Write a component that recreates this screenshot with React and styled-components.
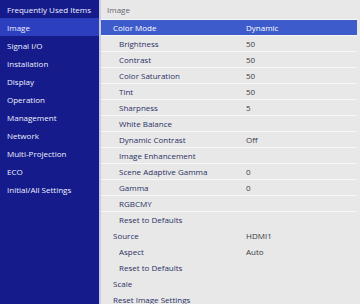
import React from "react";
import styled, { createGlobalStyle } from "styled-components";

const GlobalStyle = createGlobalStyle`
  html, body {
    margin: 0;
    padding: 0;
    background: #e8e8e8;
  }
  body {
    font-family: "Open Sans", "Noto Sans", sans-serif;
  }
`;

const Screen = styled.div`
  display: flex;
  width: 360px;
  height: 304px;
  overflow: hidden;
  font-size: 8px;
`;

const Sidebar = styled.nav`
  width: 99px;
  flex-shrink: 0;
  background: #151b8b;
  border-right: 2px solid #c9cbe0;
  display: flex;
  flex-direction: column;
`;

const NavItem = styled.div`
  height: 18px;
  flex-shrink: 0;
  display: flex;
  align-items: center;
  padding-left: 7px;
  color: #eef0ff;
  white-space: nowrap;
  background: ${(p) => (p.$active ? "#2c3fbf" : "transparent")};
`;

const Panel = styled.main`
  flex: 1;
  background: #e8e8e8;
  display: flex;
  flex-direction: column;
  padding-right: 3px;
  overflow: hidden;
`;

const Header = styled.div`
  height: 19px;
  flex-shrink: 0;
  display: flex;
  align-items: center;
  padding-left: 6px;
  color: #666670;
  border-bottom: 1px solid #f6f6f6;
`;

const Row = styled.div`
  height: 15px;
  flex-shrink: 0;
  display: grid;
  grid-template-columns: 145px 1fr;
  align-items: center;
  border-bottom: 1px solid ${(p) => (p.$line ? "#f6f6f6" : "transparent")};
  background: ${(p) => (p.$selected ? "#3d5bca" : "transparent")};
  color: ${(p) => (p.$selected ? "#ffffff" : "#2b3064")};
  white-space: nowrap;
`;

const Label = styled.span`
  padding-left: ${(p) => (p.$level === 2 ? 18 : 12)}px;
`;

const Value = styled.span`
  color: ${(p) => (p.$selected ? "#ffffff" : "#3a3a44")};
`;

const navItems = [
  "Frequently Used Items",
  "Image",
  "Signal I/O",
  "Installation",
  "Display",
  "Operation",
  "Management",
  "Network",
  "Multi-Projection",
  "ECO",
  "Initial/All Settings",
];

const rows = [
  { label: "Color Mode", value: "Dynamic", level: 1, selected: true, line: true },
  { label: "Brightness", value: "50", level: 2, line: true },
  { label: "Contrast", value: "50", level: 2, line: true },
  { label: "Color Saturation", value: "50", level: 2, line: true },
  { label: "Tint", value: "50", level: 2, line: true },
  { label: "Sharpness", value: "5", level: 2, line: true },
  { label: "White Balance", value: "", level: 2, line: true },
  { label: "Dynamic Contrast", value: "Off", level: 2, line: true },
  { label: "Image Enhancement", value: "", level: 2, line: true },
  { label: "Scene Adaptive Gamma", value: "0", level: 2, line: true },
  { label: "Gamma", value: "0", level: 2, line: true },
  { label: "RGBCMY", value: "", level: 2, line: true },
  { label: "Reset to Defaults", value: "", level: 2 },
  { label: "Source", value: "HDMI1", level: 1 },
  { label: "Aspect", value: "Auto", level: 2 },
  { label: "Reset to Defaults", value: "", level: 2 },
  { label: "Scale", value: "", level: 1 },
  { label: "Reset Image Settings", value: "", level: 1 },
];

export default function App() {
  return (
    <>
      <GlobalStyle />
      <Screen>
        <Sidebar>
          {navItems.map((item) => (
            <NavItem key={item} $active={item === "Image"}>
              {item}
            </NavItem>
          ))}
        </Sidebar>
        <Panel>
          <Header>Image</Header>
          {rows.map((r, i) => (
            <Row key={i} $selected={r.selected} $line={r.line}>
              <Label $level={r.level}>{r.label}</Label>
              <Value $selected={r.selected}>{r.value}</Value>
            </Row>
          ))}
        </Panel>
      </Screen>
    </>
  );
}
